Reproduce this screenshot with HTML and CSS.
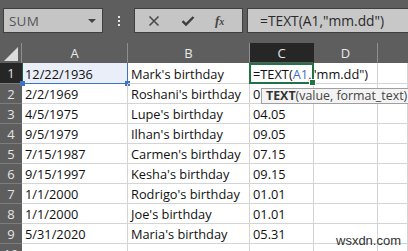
FILE: index.html
```html
<!DOCTYPE html>
<html>
<head>
<meta charset="utf-8">
<link rel="stylesheet" href="styles.css">
</head>
<body>
<div class="app">
  <div class="topbar">
    <div class="namebox"><span class="nb-text">SUM</span><span class="nb-arrow"></span></div>
    <div class="grip"><i></i><i></i><i></i></div>
    <div class="btnbox">
      <svg class="ic-x" width="12" height="12" viewBox="0 0 12 12"><path d="M1.5 1.5L10.5 10.5M10.5 1.5L1.5 10.5" stroke="#4a4a4a" stroke-width="1.6" fill="none"/></svg>
      <svg class="ic-check" width="14" height="12" viewBox="0 0 14 12"><path d="M1.5 6.2L5 9.6L12.5 2" stroke="#3c3c3c" stroke-width="2.4" fill="none"/></svg>
      <span class="fx">f<span class="fx-x">x</span></span>
    </div>
    <div class="formula">=TEXT(A1,"mm.dd")</div>
  </div>
  <div class="sheet">
    <div class="hd corner"><span class="tri"></span></div>
    <div class="hd col">A</div>
    <div class="hd col">B</div>
    <div class="hd col sel">C</div>
    <div class="hd col">D</div>
    <div class="hd col last"></div>

    <div class="rh sel">1</div>
    <div class="c ref">12/22/1936<span class="h hl"></span><span class="h hr"></span></div>
    <div class="c">Mark's birthday</div>
    <div class="c active">=TEXT(<span class="blue">A1</span>,"mm.dd")<span class="act-border"></span><span class="fill"></span></div>
    <div class="c"></div>
    <div class="c"></div>

    <div class="rh">2</div>
    <div class="c">2/2/1969</div>
    <div class="c">Roshani's birthday</div>
    <div class="c">0</div>
    <div class="c"></div>
    <div class="c"></div>

    <div class="rh">3</div>
    <div class="c">4/5/1975</div>
    <div class="c">Lupe's birthday</div>
    <div class="c">04.05</div>
    <div class="c"></div>
    <div class="c"></div>

    <div class="rh">4</div>
    <div class="c">9/5/1979</div>
    <div class="c">Ilhan's birthday</div>
    <div class="c">09.05</div>
    <div class="c"></div>
    <div class="c"></div>

    <div class="rh">5</div>
    <div class="c">7/15/1987</div>
    <div class="c">Carmen's birthday</div>
    <div class="c">07.15</div>
    <div class="c"></div>
    <div class="c"></div>

    <div class="rh">6</div>
    <div class="c">9/15/1997</div>
    <div class="c">Kesha's birthday</div>
    <div class="c">09.15</div>
    <div class="c"></div>
    <div class="c"></div>

    <div class="rh">7</div>
    <div class="c">1/1/2000</div>
    <div class="c">Rodrigo's birthday</div>
    <div class="c">01.01</div>
    <div class="c"></div>
    <div class="c"></div>

    <div class="rh">8</div>
    <div class="c">1/1/2000</div>
    <div class="c">Joe's birthday</div>
    <div class="c">01.01</div>
    <div class="c"></div>
    <div class="c"></div>

    <div class="rh">9</div>
    <div class="c">5/31/2020</div>
    <div class="c">Maria's birthday</div>
    <div class="c">05.31</div>
    <div class="c"></div>
    <div class="c"></div>

    <div class="rh last-row">10</div>
    <div class="c"></div>
    <div class="c"></div>
    <div class="c"></div>
    <div class="c"></div>
    <div class="c"></div>
  </div>
  <div class="tooltip"><b>TEXT</b>(value, format_text)</div>
  <div class="watermark">wsxdn.com</div>
</div>
</body>
</html>
```
FILE: styles.css
```css
html, body {
  margin: 0;
  padding: 0;
  background: #ffffff;
  overflow: hidden;
}
.app {
  position: relative;
  width: 408px;
  height: 251px;
  overflow: hidden;
  font-family: "Open Sans", "Noto Sans", sans-serif;
  font-size: 12.8px;
  color: #111;
}
.topbar {
  height: 43px;
  background: #5e5e5e;
  display: flex;
  align-items: flex-start;
  padding: 8px 0 0 3px;
  box-sizing: border-box;
}
.namebox {
  width: 100px;
  height: 25px;
  box-sizing: border-box;
  background: #c5c5c5;
  border: 1px solid #3f3f3f;
  display: flex;
  align-items: center;
  justify-content: space-between;
  padding: 0 6px 0 5px;
}
.nb-text {
  color: #555;
  font-size: 13.5px;
  letter-spacing: 0.2px;
}
.nb-arrow {
  width: 0;
  height: 0;
  border-left: 4px solid transparent;
  border-right: 4px solid transparent;
  border-top: 4px solid #444;
  margin-top: 1px;
}
.grip {
  width: 31px;
  height: 25px;
  display: flex;
  flex-direction: column;
  align-items: center;
  justify-content: center;
  gap: 2px;
}
.grip i {
  display: block;
  width: 2px;
  height: 2px;
  background: #e6e6e6;
}
.btnbox {
  width: 109px;
  height: 25px;
  box-sizing: border-box;
  background: #c5c5c5;
  border: 1px solid #3f3f3f;
  display: flex;
  align-items: center;
  padding-left: 13px;
}
.ic-x { margin-right: 21px; }
.ic-check { margin-right: 20px; }
.fx {
  font-family: "Liberation Serif", serif;
  font-style: italic;
  font-weight: bold;
  color: #444;
  font-size: 13px;
}
.fx-x { font-size: 10px; }
.formula {
  flex: 1;
  height: 25px;
  margin-left: 4px;
  box-sizing: border-box;
  background: #c8c8c8;
  border: 1px solid #3f3f3f;
  border-right: none;
  color: #2a2a2a;
  font-size: 13.8px;
  line-height: 23px;
  padding-left: 12px;
}
.sheet {
  display: grid;
  grid-template-columns: 22px 106px 122px 64px 64px 30px;
  grid-template-rows: 20px 21px repeat(8, 20px) 20px;
}
.hd {
  background: #5e5e5e;
  color: #e8e8e8;
  font-size: 13px;
  display: flex;
  align-items: center;
  justify-content: center;
  border-right: 1px solid #8f8f8f;
  box-sizing: border-box;
  position: relative;
}
.hd.col { border-bottom: 1px solid #5e5e5e; }
.hd.sel {
  background: #262626;
  color: #e6e6e6;
  border-right-color: #262626;
}
.hd.last { border-right: none; }
.corner { border-right-color: #8f8f8f; }
.tri {
  position: absolute;
  right: 3px;
  bottom: 2px;
  width: 0;
  height: 0;
  border-left: 14px solid transparent;
  border-bottom: 14px solid #dcdcdc;
}
.rh {
  background: #5e5e5e;
  color: #e4e4e4;
  font-size: 13px;
  display: flex;
  align-items: center;
  justify-content: center;
  border-bottom: 1px solid #7d7d7d;
  box-sizing: border-box;
}
.rh.sel { background: #262626; }
.rh.last-row { align-items: flex-start; padding-top: 1px; line-height: 18px; }
.c {
  border-right: 1px solid #d4d4d4;
  border-bottom: 1px solid #d4d4d4;
  box-sizing: border-box;
  padding: 1px 0 0 3px;
  display: flex;
  align-items: center;
  white-space: nowrap;
  overflow: visible;
  position: relative;
}
.ref {
  background: #e9eef8;
  border-right: 1px solid #3f72c7;
  border-bottom: 1px solid #3f72c7;
  border-left: 1px solid #1f5c48;
  padding-left: 2px;
}
.h {
  position: absolute;
  width: 5px;
  height: 5px;
  background: #3f72c7;
  bottom: -3px;
}
.hl { left: -3px; }
.hr { right: -3px; }
.blue { color: #3f6fc4; }
.active { overflow: visible; z-index: 2; }
.act-border {
  position: absolute;
  left: -1px;
  top: 0;
  right: -1px;
  bottom: -1px;
  border: 2px solid #217346;
  pointer-events: none;
}
.fill {
  position: absolute;
  right: -3px;
  bottom: -3px;
  width: 5px;
  height: 5px;
  background: #217346;
  border: 1px solid #fff;
  box-sizing: content-box;
}
.tooltip {
  position: absolute;
  left: 261px;
  top: 88px;
  height: 16px;
  box-sizing: border-box;
  padding: 0 5px 0 4px;
  background: #f3f3f3;
  border: 1px solid #a0a0a0;
  color: #444;
  font-size: 12.4px;
  line-height: 14px;
  white-space: nowrap;
  z-index: 3;
}
.tooltip b { color: #333; }
.watermark {
  position: absolute;
  left: 336px;
  top: 233px;
  font-family: "Liberation Sans", Arial, sans-serif;
  font-size: 13px;
  color: #333;
}
```
